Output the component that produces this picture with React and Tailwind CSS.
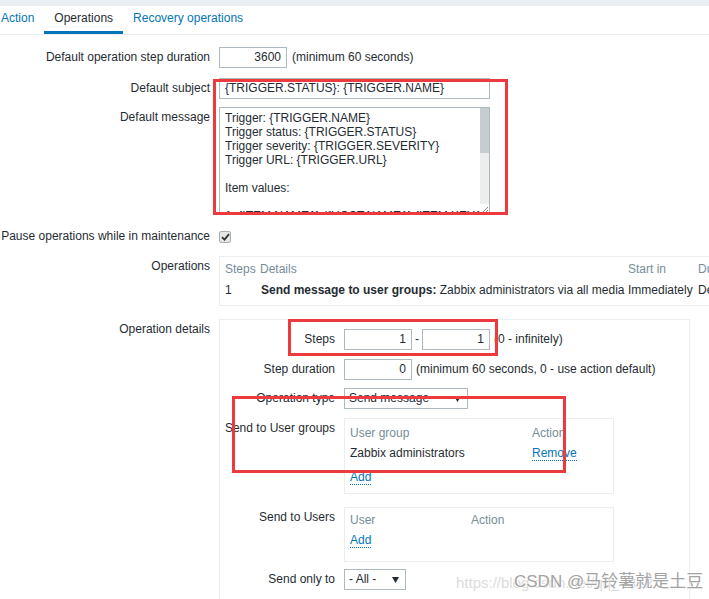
import React from "react";

const FONT = { fontFamily: '"Liberation Sans", Arial, "Noto Sans CJK SC", sans-serif' };

// form row with right aligned label
const Row = ({ label, labelWidth = "w-[210px]", className = "", children }) => (
    <div className={`flex items-start ${className}`}>
        <div className={`${labelWidth} shrink-0 text-right leading-[21px] whitespace-nowrap`}>{label}</div>
        <div className="ml-[9px] flex items-start">{children}</div>
    </div>
);

const NumInput = ({ value, w = "w-[68px]" }) => (
    <div className={`${w} h-[21px] border border-[#acbbc2] bg-white text-right pr-[5px] leading-[19px]`}>{value}</div>
);

const Select = ({ value, w }) => (
    <div className={`${w} h-[21px] border border-[#acbbc2] bg-white flex items-center justify-between pl-[4px] pr-[6px]`}>
        <span className="leading-[19px]">{value}</span>
        <svg width="7" height="6" viewBox="0 0 7 6"><polygon points="0,0 7,0 3.5,6" fill="#1f2c33" /></svg>
    </div>
);

const Link = ({ children }) => (
    <span className="text-[#0275b8] border-b border-dotted border-[#0275b8] leading-[14px] inline-block">{children}</span>
);

const App = () => {
    const messageLines = [
        "Trigger: {TRIGGER.NAME}",
        "Trigger status: {TRIGGER.STATUS}",
        "Trigger severity: {TRIGGER.SEVERITY}",
        "Trigger URL: {TRIGGER.URL}",
        "",
        "Item values:",
        "",
        "1. {ITEM.NAME1} ({HOST.NAME1}:{ITEM.KEY1}): {ITEM.VALUE1}",
    ];

    return (
        <div className="relative w-[709px] h-[599px] overflow-hidden bg-white text-[12px] text-[#1f2c33]" style={FONT}>
            {/* top strip */}
            <div className="h-[6px] bg-[#ebeef0]" />

            {/* Tabs */}
            <div className="flex h-[29px] border-b border-[#ebeef0] ml-[-9px]">
                <div className="px-[10px] pt-[3px] text-[#0275b8]">Action</div>
                <div className="px-[10px] pt-[3px] border-b-[3px] border-[#0275b8] h-[28px]">Operations</div>
                <div className="px-[10px] pt-[3px] text-[#0275b8]">Recovery operations</div>
            </div>

            {/* Form */}
            <Row label="Default operation step duration" className="mt-[12px]">
                <NumInput value="3600" />
                <span className="ml-[5px] leading-[21px]">(minimum 60 seconds)</span>
            </Row>

            <Row label="Default subject" className="mt-[10px]">
                <div className="w-[271px] h-[21px] border border-[#acbbc2] pl-[5px] leading-[19px] whitespace-nowrap">
                    {"{TRIGGER.STATUS}: {TRIGGER.NAME}"}
                </div>
            </Row>

            <Row label="Default message" className="mt-[8px]">
                <div className="w-[271px] h-[107px] border border-[#acbbc2] flex overflow-hidden">
                    <div className="flex-1 pl-[5px] pt-[3px] leading-[14px] whitespace-nowrap overflow-hidden">
                        {messageLines.map((l, i) => (
                            <div key={i} className="h-[14px]">{l}</div>
                        ))}
                    </div>
                    <div className="w-[9px] bg-[#ededed] relative">
                        <div className="h-[45px] bg-[#c6ccd0]" />
                        <div className="absolute bottom-0 right-0 w-[9px] h-[9px] bg-white flex items-end justify-end">
                            <svg width="7" height="7" viewBox="0 0 7 7"><path d="M6 1 L1 6 M6 4 L4 6" stroke="#888" strokeWidth="1" /></svg>
                        </div>
                    </div>
                </div>
            </Row>

            <Row label="Pause operations while in maintenance" className="mt-[12px]">
                <div className="h-[21px] flex items-center">
                    <div className="w-[12px] h-[12px] border border-[#a9b0b4] bg-[#e4e6e7] rounded-[2px] flex items-center justify-center">
                        <svg width="9" height="8" viewBox="0 0 9 8"><path d="M1 4.2 L3.5 6.6 L8 1.2" stroke="#333" strokeWidth="1.8" fill="none" /></svg>
                    </div>
                </div>
            </Row>

            <Row label="Operations" className="mt-[9px]">
                <div className="w-[560px] border border-[#ebeef0] pl-[5px] pt-[2px] pb-[4px] whitespace-nowrap">
                    <div className="flex leading-[21px] text-[#768d99]">
                        <div className="w-[35px]">Steps</div>
                        <div className="w-[368px]">Details</div>
                        <div className="w-[70px]">Start in</div>
                        <div>Duration</div>
                    </div>
                    <div className="flex leading-[21px]">
                        <div className="w-[36px]">1</div>
                        <div className="w-[367px]"><b>Send message to user groups:</b> Zabbix administrators via all media</div>
                        <div className="w-[70px]">Immediately</div>
                        <div>Default</div>
                    </div>
                </div>
            </Row>

            <Row label="Operation details" className="mt-[13px]">
                <div className="w-[471px] h-[300px] border border-[#ebeef0] pt-[9px]">
                    <Row label="Steps" labelWidth="w-[115px]">
                        <NumInput value="1" />
                        <span className="mx-[3px] leading-[21px]">-</span>
                        <NumInput value="1" />
                        <span className="ml-[4px] leading-[21px]">(0 - infinitely)</span>
                    </Row>
                    <Row label="Step duration" labelWidth="w-[115px]" className="mt-[9px]">
                        <NumInput value="0" />
                        <span className="ml-[4px] leading-[21px]">(minimum 60 seconds, 0 - use action default)</span>
                    </Row>
                    <Row label="Operation type" labelWidth="w-[115px]" className="mt-[8px]">
                        <Select value="Send message" w="w-[124px]" />
                    </Row>
                    <Row label="Send to User groups" labelWidth="w-[115px]" className="mt-[9px]">
                        <div className="w-[270px] border border-[#ebeef0] pl-[5px] pt-[4px] pb-[6px]">
                            <div className="flex leading-[20px] text-[#768d99]">
                                <div className="w-[182px]">User group</div>
                                <div>Action</div>
                            </div>
                            <div className="flex leading-[20px]">
                                <div className="w-[182px]">Zabbix administrators</div>
                                <div><Link>Remove</Link></div>
                            </div>
                            <div className="mt-[4px] leading-[20px]"><Link>Add</Link></div>
                        </div>
                    </Row>
                    <Row label="Send to Users" labelWidth="w-[115px]" className="mt-[13px]">
                        <div className="w-[270px] border border-[#ebeef0] pl-[5px] pt-[2px] pb-[11px]">
                            <div className="flex leading-[20px] text-[#768d99]">
                                <div className="w-[121px]">User</div>
                                <div>Action</div>
                            </div>
                            <div className="leading-[20px]"><Link>Add</Link></div>
                        </div>
                    </Row>
                    <Row label="Send only to" labelWidth="w-[115px]" className="mt-[7px]">
                        <Select value="- All -" w="w-[62px]" />
                    </Row>
                </div>
            </Row>

            {/* red annotation boxes */}
            <div className="absolute left-[213px] top-[79px] w-[295px] h-[136px] border-[3px] border-[#ec3a3f] pointer-events-none" />
            <div className="absolute left-[288px] top-[319px] w-[210px] h-[37px] border-[3px] border-[#ec3a3f] pointer-events-none" />
            <div className="absolute left-[232px] top-[396px] w-[334px] h-[77px] border-[3px] border-[#ec3a3f] pointer-events-none" />

            {/* watermark */}
            <div className="absolute left-[456px] top-[572px] text-[15px] text-[#dcdcdc] whitespace-nowrap">https://blog.csdn.net/qq_4312</div>
            <div
                className="absolute left-[514px] top-[569px] text-[17px] text-[#a3a3a3] whitespace-nowrap"
                style={{ textShadow: "0 0 2px #fff, 0 0 2px #fff" }}
            >
                CSDN @马铃薯就是土豆
            </div>
        </div>
    );
};

export default App;
